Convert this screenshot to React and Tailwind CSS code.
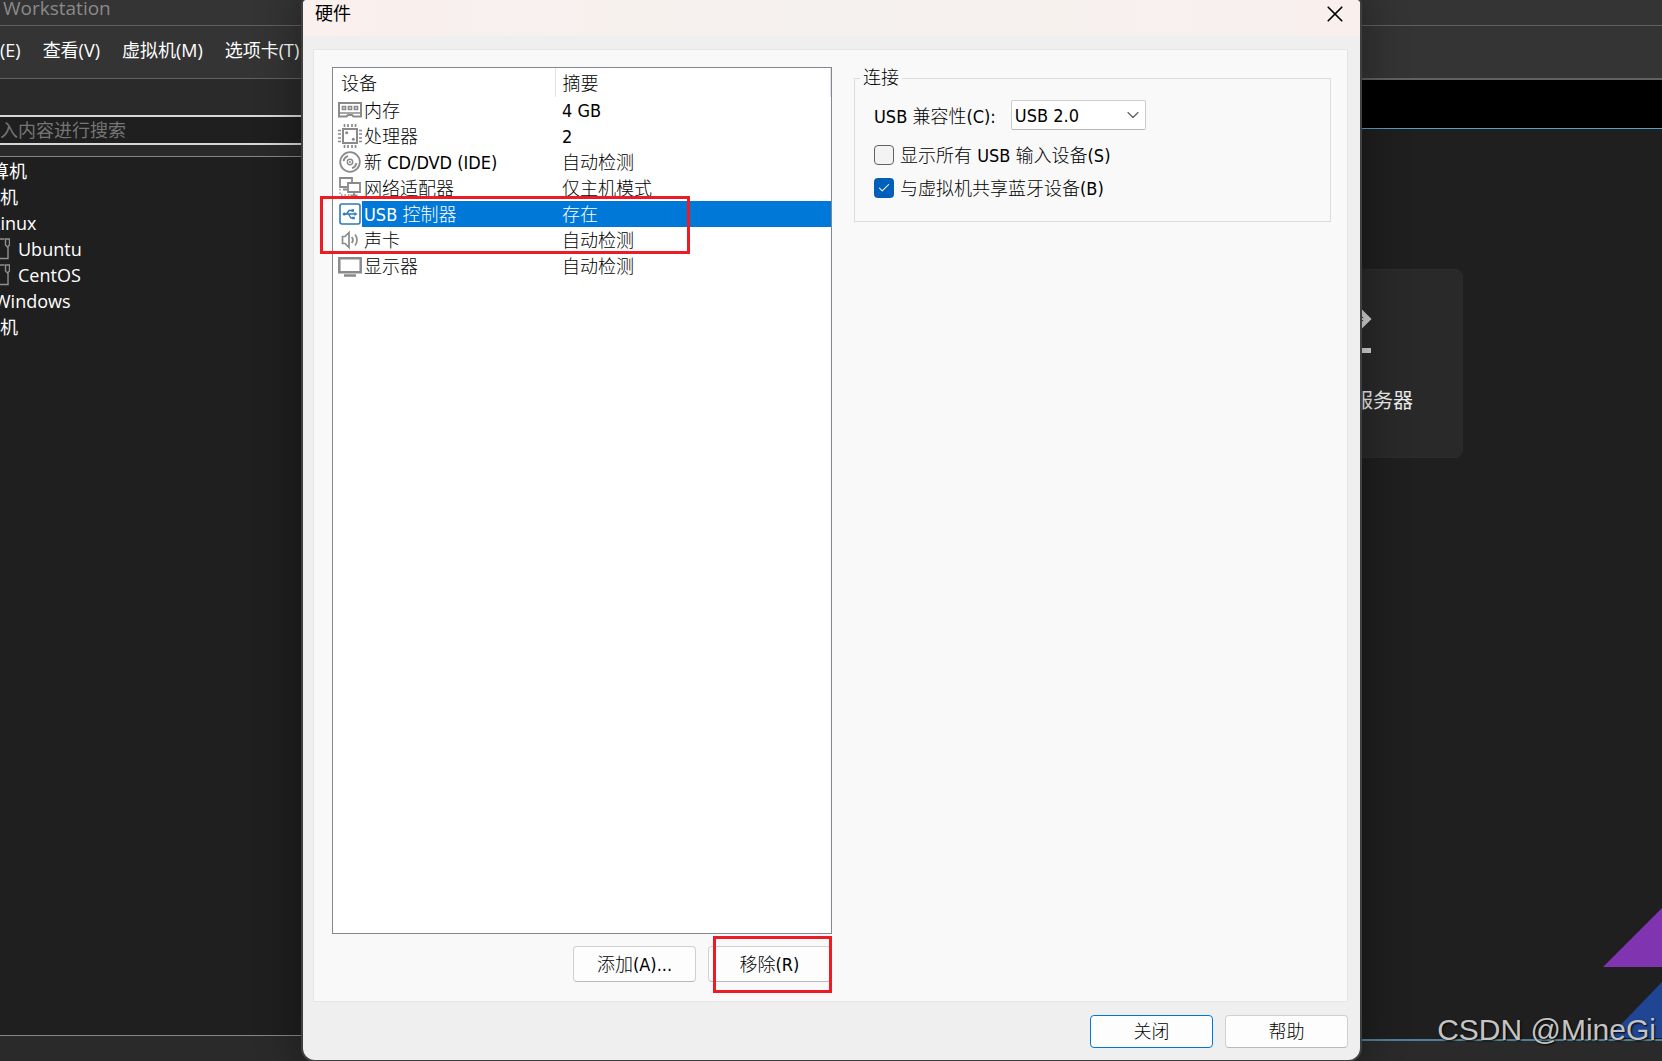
import React from 'react';
import { X, ChevronDown, Check } from 'lucide-react';

// Small line icons used in the first column of the hardware list
const MemoryIcon = () => (
  <svg width="24" height="24" viewBox="0 0 24 24" fill="none" stroke="#8a8a8a" strokeWidth="2">
    <path d="M1 5h22v13.500H15.500l-1.500-1.500h-4l-1.500 1.500H1z" />
    <path d="M1 15h22" strokeWidth="1.500" />
    <path d="M4.500 8.500h3v3h-3zM10.500 8.500h3v3h-3zM16.500 8.500h3v3h-3z" strokeWidth="1.700" />
  </svg>
);

const CpuIcon = () => (
  <svg width="24" height="24" viewBox="0 0 24 24" fill="none" stroke="#8a8a8a" strokeWidth="2">
    <path d="M5 5h14v14H5z" />
    <path d="M6.500 0v3M10 0v3M14 0v3M17.500 0v3M6.500 21v3M10 21v3M14 21v3M17.500 21v3" strokeWidth="1.700" />
    <path d="M0 6.500h3M0 10h3M0 14h3M0 17.500h3M21 6.500h3M21 10h3M21 14h3M21 17.500h3" strokeWidth="1.700" />
    <circle cx="8.700" cy="8.700" r="1.500" fill="#8a8a8a" stroke="none" />
    <circle cx="15.300" cy="15.300" r="1.500" fill="#8a8a8a" stroke="none" />
  </svg>
);

const DiscIcon = () => (
  <svg width="24" height="24" viewBox="0 0 24 24" fill="none" stroke="#8a8a8a" strokeWidth="1.800">
    <circle cx="12" cy="12" r="9.800" />
    <circle cx="12" cy="12" r="2.700" strokeWidth="1.400" />
    <circle cx="12" cy="12" r="1" fill="#8a8a8a" stroke="none" />
    <path d="M5.500 11A7 7 0 0 1 10 5.800M18.500 13a7 7 0 0 1-4.500 5.200" />
  </svg>
);

const NetworkIcon = () => (
  <svg width="24" height="24" viewBox="0 0 24 24" fill="none" stroke="#8a8a8a" strokeWidth="1.800">
    <path d="M9 11H2V2h12v4" />
    <path d="M10 7h12v9H10z" fill="#fff" />
    <path d="M16 16v3M12.500 19.500h7M5 13.500h4" />
    <path d="M2 13v6h10" strokeDasharray="1.500 2" strokeWidth="1.300" />
  </svg>
);

const UsbIcon = () => (
  <svg width="24" height="24" viewBox="0 0 24 24" fill="none" stroke="#2f79b5" strokeWidth="1.600">
    <rect x="2" y="2" width="20" height="20" rx="2" fill="#fff" />
    <path d="M6 12h12M8.500 12l2.500-3.500h3M10.500 12l2.500 4h2" strokeWidth="1.400" />
    <circle cx="6.300" cy="12" r="1.600" fill="#2f79b5" stroke="none" />
    <path d="M16.500 10L19.500 12l-3 2zM13.500 7.300h2.500v2.500h-2.500zM14.300 14.800H16.800v2.500h-2.500z" fill="#2f79b5" stroke="none" />
  </svg>
);

const SoundIcon = () => (
  <svg width="24" height="24" viewBox="0 0 24 24" fill="none" stroke="#8a8a8a" strokeWidth="1.700">
    <path d="M4.500 8.500H7L11 4.500v15l-4-4H4.500z" />
    <path d="M13.800 9a5 5 0 0 1 0 6M17 6.500a8.500 8.500 0 0 1 0 11" />
  </svg>
);

const DisplayIcon = () => (
  <svg width="24" height="24" viewBox="0 0 24 24" fill="none" stroke="#8a8a8a" strokeWidth="2.500">
    <path d="M1.300 4.300h21.400v14H1.300zM6 21.500h12" />
  </svg>
);

// Tree icon for a virtual machine, drawn as a page with a clip
const VmIcon = () => (
  <svg width="20" height="22" viewBox="0 0 20 22" fill="none" stroke="#8f8f8f" strokeWidth="1.400">
    <path d="M14.500 1H1v19.500h17V9" />
    <path d="M15.500 1h4v6l-2 2-2-2z" />
  </svg>
);

const ServerIcon = () => (
  <svg width="60" height="50" viewBox="0 0 60 50" fill="none" stroke="#d4d4d4">
    <path d="M43 2l13 13-13 13" strokeWidth="5" />
    <path d="M20 15h34" strokeWidth="2" />
    <path d="M20 46.500h39" strokeWidth="5" />
  </svg>
);

const devices = [
  { name: '内存', summary: '4 GB', Icon: MemoryIcon },
  { name: '处理器', summary: '2', Icon: CpuIcon },
  { name: '新 CD/DVD (IDE)', summary: '自动检测', Icon: DiscIcon },
  { name: '网络适配器', summary: '仅主机模式', Icon: NetworkIcon },
  { name: 'USB 控制器', summary: '存在', Icon: UsbIcon, selected: true },
  { name: '声卡', summary: '自动检测', Icon: SoundIcon },
  { name: '显示器', summary: '自动检测', Icon: DisplayIcon },
];

const Sidebar = () => (
  <aside className="flex w-80 shrink-0 flex-col bg-[#2a2a2a]">
    <div className="mt-9 h-[30px] border-y-2 border-[#d8d8d8] bg-[#1f1f1f]">
      <input
        type="text"
        aria-label="搜索"
        placeholder="入内容进行搜索"
        className="h-full w-full bg-transparent text-[18px] outline-none placeholder:text-[#757575]"
      />
    </div>
    <ul className="mt-[11px] flex-1 overflow-hidden border-y border-[#85858c] bg-[#1f1f1f] pt-px text-[18px] leading-[26px] text-white">
      <li className="-ml-[9px]">算机</li>
      <li>机</li>
      <li className="-ml-[9px]">Linux</li>
      <li className="-ml-[10px] flex items-center gap-2">
        <VmIcon />
        Ubuntu
      </li>
      <li className="-ml-[10px] flex items-center gap-2">
        <VmIcon />
        CentOS
      </li>
      <li className="-ml-[6px]">Windows</li>
      <li>机</li>
    </ul>
    <div className="h-[25px]" />
  </aside>
);

const HomeTab = () => (
  <main className="relative flex flex-1 flex-col bg-[#1f1f1f]">
    <div className="h-[50px] border-t border-b border-t-[#606060] border-b-[#5a9dbf] bg-black" />
    <div className="flex flex-1 items-start justify-end pt-[140px] pr-[199px]">
      <div className="flex h-[189px] w-60 flex-col items-end rounded-lg border border-[#2c2c2c] bg-[#292929] pt-[34px]">
        <div className="pr-[90px]">
          <ServerIcon />
        </div>
        <span className="mt-[33px] pr-[49px] text-[20px] leading-7 text-[#ededed]">服务器</span>
      </div>
    </div>
    <svg className="absolute right-0 bottom-[22px]" width="60" height="132" viewBox="0 0 60 132">
      <path d="M1 60L60 1v59z" fill="#8034b0" />
      <path d="M6 131L60 75v56z" fill="#1f4593" />
    </svg>
    <div className="h-[22px] border-t-2 border-[#4f7f99] bg-[#2a2a2a]" />
    <span className="absolute right-[6px] bottom-[15px] text-[30px] leading-8 font-['Liberation_Sans',sans-serif] text-[#c4c4c4] [text-shadow:1px_1px_2px_#000]">
      CSDN @MineGi
    </span>
  </main>
);

const DeviceTable = () => (
  <table className="w-full table-fixed border-collapse text-left leading-6">
    <colgroup>
      <col className="w-[29px]" />
      <col className="w-[193px]" />
      <col />
    </colgroup>
    <thead>
      <tr className="h-[29px]">
        <th colSpan={2} className="border-r border-[#e3e3e3] p-0 pt-[2px] pl-2 font-light">设备</th>
        <th className="border-r border-[#e3e3e3] p-0 pt-[2px] pl-[7px] font-light">摘要</th>
      </tr>
    </thead>
    <tbody>
      {devices.map(({ name, summary, Icon, selected }) => (
        <tr key={name} className="h-[26px]">
          <td className="p-0 pl-[5px]">
            <Icon />
          </td>
          <td className={selected ? 'bg-[#0078d7] p-0 pt-[2px] pl-[2px] text-white' : 'p-0 pt-[2px] pl-[2px]'}>{name}</td>
          <td className={selected ? 'bg-[#0078d7] p-0 pt-[2px] pl-[7px] text-white' : 'p-0 pt-[2px] pl-[7px]'}>{summary}</td>
        </tr>
      ))}
    </tbody>
  </table>
);

const ConnectionGroup = () => (
  <fieldset className="h-[155px] border border-[#dcdcdc] pl-[19px]">
    <legend className="-ml-[14px] px-[3px] leading-[22px]">连接</legend>
    <div className="mt-[11px] flex items-center gap-[15px]">
      <label htmlFor="usb-compat" className="pt-[3px]">USB 兼容性(C):</label>
      <div className="relative">
        <select
          id="usb-compat"
          defaultValue="2.0"
          className="h-[30px] w-[135px] appearance-none rounded-xs border border-[#cccccc] border-b-[#b8b8b8] bg-white pt-px pl-[3px] outline-none"
        >
          <option value="2.0">USB 2.0</option>
        </select>
        <ChevronDown size={20} strokeWidth={1.3} className="pointer-events-none absolute top-[5px] right-[3px] text-[#5a5a5a]" />
      </div>
    </div>
    <label className="mt-[11px] flex h-[28px] items-center gap-[6px]">
      <input type="checkbox" className="h-5 w-5 appearance-none rounded-sm border border-[#626262] bg-[#f3f3f3]" />
      <span className="pt-[2px]">显示所有 USB 输入设备(S)</span>
    </label>
    <label className="mt-[5px] flex h-[28px] items-center gap-[6px]">
      <span className="relative flex">
        <input type="checkbox" defaultChecked className="h-5 w-5 appearance-none rounded-sm bg-[#005fb8]" />
        <Check size={14} strokeWidth={1.8} className="pointer-events-none absolute top-[3px] left-[3px] text-white" />
      </span>
      <span className="pt-[2px]">与虚拟机共享蓝牙设备(B)</span>
    </label>
  </fieldset>
);

const HardwareDialog = () => (
  <div
    role="dialog"
    aria-label="硬件"
    className="absolute top-0 right-[302px] bottom-px left-[303px] flex flex-col overflow-hidden rounded-t-sm rounded-b-xl bg-[#efefef] font-['DejaVu_Sans_Condensed','Noto_Sans_CJK_SC',sans-serif] text-[18px] leading-[26px] font-light text-black shadow-[0_0_0_2px_#404040,0_0_40px_8px_rgba(0,0,0,0.3)]"
  >
    <div className="flex h-9 items-start justify-between bg-linear-to-r from-[#faf0ee] via-[#f5f1ee] to-[#f9f0ee] pr-4 pl-3 font-normal">
      <h1 className="pt-px">硬件</h1>
      <button type="button" aria-label="关闭窗口" className="mt-[5px]">
        <X size={18} strokeWidth={1.5} viewBox="4 4 16 16" />
      </button>
    </div>

    <div className="mt-[13px] mr-3 ml-[10px] flex flex-1 gap-[22px] border border-[#e5e5e5] bg-[#f9f9f9] pt-[17px] pr-4 pl-[18px]">
      {/* Left side: device list and its buttons */}
      <div className="flex w-[500px] flex-col">
        <div className="relative flex-1 border border-[#828790] bg-white">
          <DeviceTable />
          <div className="pointer-events-none absolute top-[128px] -left-[13px] h-[58px] w-[370px] border-3 border-[#ed1c24]" />
        </div>
        <div className="mt-3 mb-[19px] flex justify-end gap-3 pr-px">
          <button type="button" className="h-9 w-[123px] rounded-sm border border-[#d0d0d0] border-b-[#bababa] bg-[#fdfdfd] pt-[2px]">
            添加(A)...
          </button>
          <div className="relative">
            <button type="button" className="h-9 w-[123px] rounded-sm border border-[#d0d0d0] border-b-[#bababa] bg-[#fdfdfd] pt-[2px]">
              移除(R)
            </button>
            <div className="pointer-events-none absolute -top-[10px] -right-px -bottom-[11px] left-[5px] border-3 border-[#ed1c24]" />
          </div>
        </div>
      </div>

      {/* Right side: settings of the selected device */}
      <div className="flex-1">
        <ConnectionGroup />
      </div>
    </div>

    <div className="flex justify-end gap-3 pt-[13px] pr-3 pb-3">
      <button type="button" className="h-[33px] w-[123px] rounded-sm border border-[#0078d4] bg-[#fdfdfd]">
        关闭
      </button>
      <button type="button" className="h-[33px] w-[123px] rounded-sm border border-[#d0d0d0] border-b-[#bababa] bg-[#fdfdfd]">
        帮助
      </button>
    </div>
  </div>
);

export default function App() {
  return (
    <div className="relative flex h-screen flex-col overflow-hidden bg-[#343434] font-['Open_Sans','Noto_Sans_CJK_SC',sans-serif] text-white">
      <header className="h-[26px] border-b border-[#606060] pl-[3px] text-[19px] leading-[17px] text-[#8a8a8a]">Workstation</header>
      <nav className="flex h-[53px] items-center border-b border-[#606060] pb-1 text-[18px] whitespace-nowrap">
        <div className="-ml-[36px] flex gap-[22px]">
          <button type="button">编辑(E)</button>
          <button type="button">查看(V)</button>
          <button type="button">虚拟机(M)</button>
          <button type="button">选项卡(T)</button>
        </div>
      </nav>
      <div className="flex flex-1">
        <Sidebar />
        <HomeTab />
      </div>
      <HardwareDialog />
    </div>
  );
}
